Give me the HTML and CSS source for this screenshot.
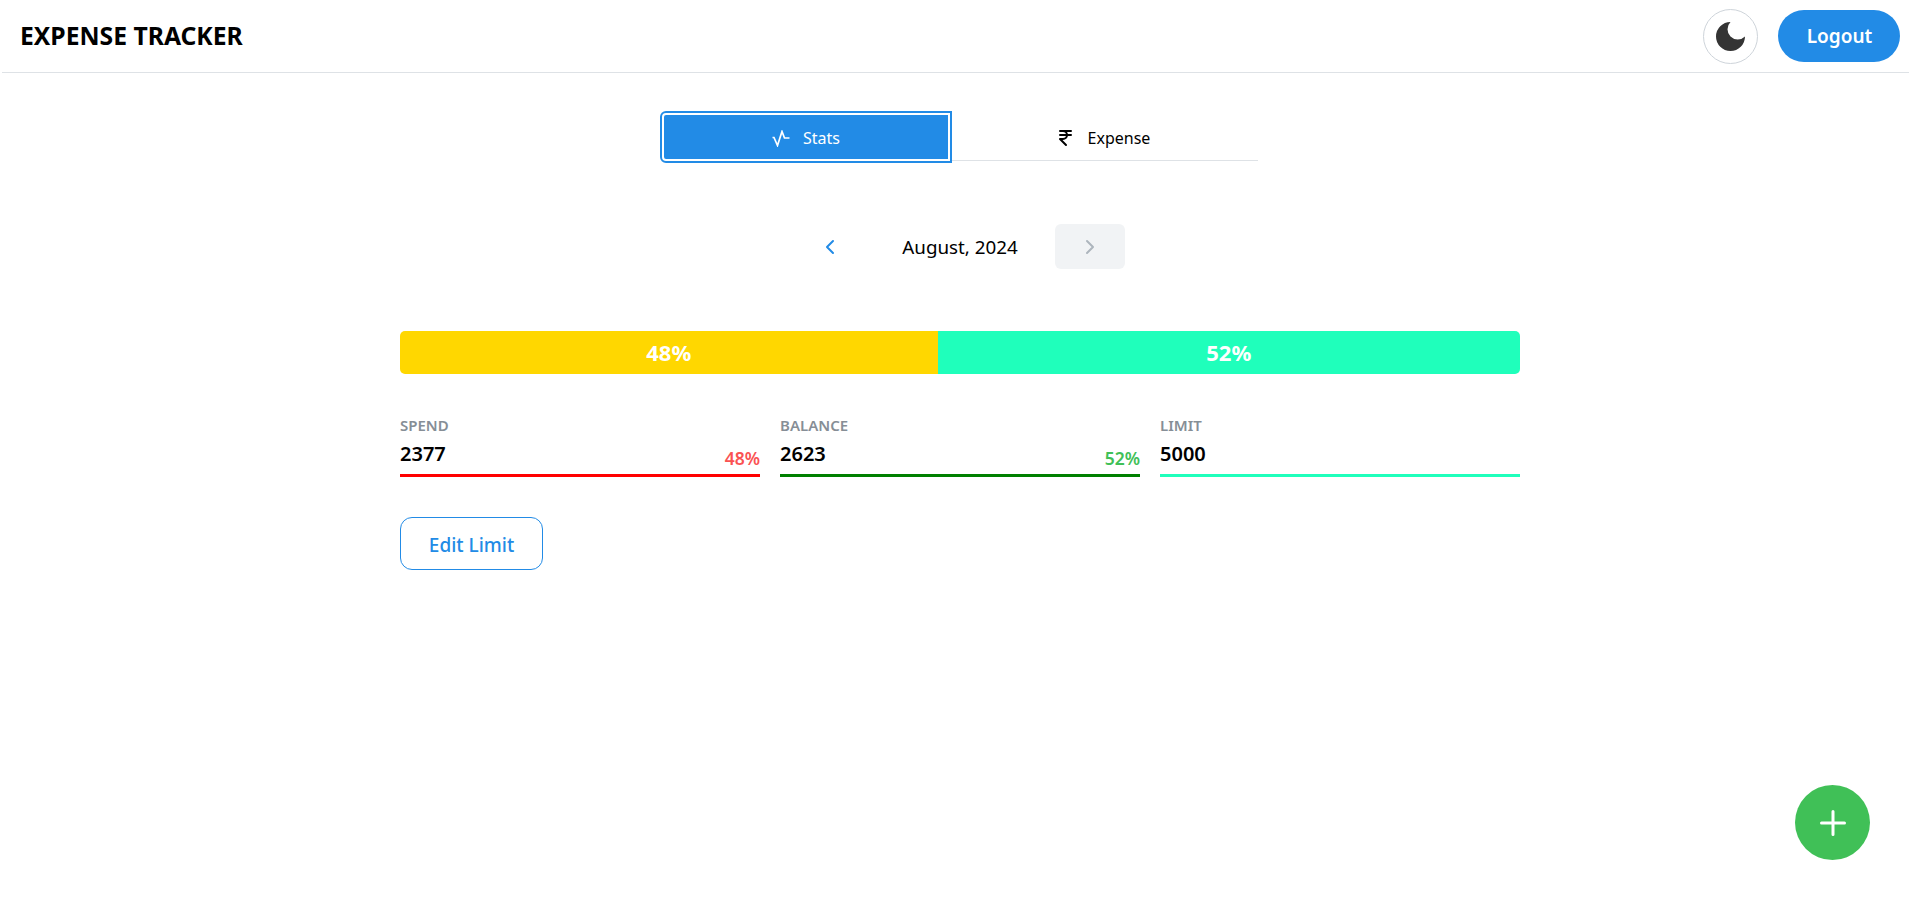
FILE: index.html
```html
<!DOCTYPE html>
<html lang="en">
<head>
<meta charset="utf-8">
<title>Expense Tracker</title>
<link rel="stylesheet" href="styles.css">
</head>
<body>
<header class="topbar">
  <h1 class="brand">EXPENSE TRACKER</h1>
  <div class="actions">
    <button class="theme-btn" aria-label="Toggle theme">
      <svg class="moon" viewBox="3 3 18 18"><path d="M12 3a6 6 0 0 0 9 9 9 9 0 1 1-9-9Z"/></svg>
    </button>
    <button class="logout">Logout</button>
  </div>
</header>
<main class="content">
  <nav class="tabs">
    <button class="tab active">
      <svg class="tab-icon" viewBox="0 0 18 17"><path d="M.5 7.5H2L5.5 15.5 10 1.5 12.5 8H17.5"/></svg>
      <span>Stats</span>
    </button>
    <button class="tab">
      <svg class="rupee" viewBox="0 0 24 24"><path d="M18 5H7h3a4 4 0 0 1 0 8H7l6 6M7 9h11"/></svg>
      <span>Expense</span>
    </button>
  </nav>
  <div class="month-row">
    <button class="nav-btn"><svg class="chev" viewBox="0 0 24 24"><path d="M15 6l-6 6 6 6"/></svg></button>
    <span class="month">August, 2024</span>
    <button class="nav-btn disabled"><svg class="chev" viewBox="0 0 24 24"><path d="M9 6l6 6-6 6"/></svg></button>
  </div>
  <div class="progress">
    <div class="seg seg-spend" style="width:48%">48%</div>
    <div class="seg seg-balance" style="width:52%">52%</div>
  </div>
  <section class="stats">
    <div class="stat stat-spend">
      <div class="stat-label">SPEND</div>
      <div class="stat-row"><span class="stat-value">2377</span><span class="stat-pct pct-red">48%</span></div>
    </div>
    <div class="stat stat-balance">
      <div class="stat-label">BALANCE</div>
      <div class="stat-row"><span class="stat-value">2623</span><span class="stat-pct pct-green">52%</span></div>
    </div>
    <div class="stat stat-limit">
      <div class="stat-label">LIMIT</div>
      <div class="stat-row"><span class="stat-value">5000</span></div>
    </div>
  </section>
  <button class="edit-limit">Edit Limit</button>
</main>
<button class="fab" aria-label="Add expense">
  <svg class="plus" viewBox="0 0 26 26"><path d="M13 1.5v23M1.5 13h23"/></svg>
</button>
</body>
</html>
```
FILE: styles.css
```css
* { box-sizing: border-box; }
html, body { margin: 0; padding: 0; background: #fff; }
body { font-family: "Noto Sans", "Open Sans", sans-serif; color: #000; height: 900px; overflow: hidden; }
button { font-family: inherit; cursor: pointer; }

.topbar {
  height: 73px;
  margin-left: 2px;
  padding: 0 9px 0 18px;
  display: flex;
  align-items: center;
  justify-content: space-between;
  border-bottom: 1px solid #dee2e6;
}
.brand { margin: 0; font-size: 24.7px; font-weight: 700; line-height: 1; color: #000; }
.actions { display: flex; align-items: center; gap: 20px; }
.theme-btn {
  width: 55px; height: 55px; padding: 0;
  border: 1px solid #ced4da; border-radius: 50%; background: #fff;
  display: flex; align-items: center; justify-content: center;
}
.moon { width: 29px; height: 29px; fill: #343434; }
.logout {
  width: 122px; height: 52px; padding: 0 0 0 1px;
  border: 0; border-radius: 26px; background: #228be6; color: #fff;
  font-size: 19px; font-weight: 600;
}

.content { width: 1120px; margin-left: 400px; padding-top: 40px; }
.tabs {
  width: 596px; margin: 0 auto;
  display: flex;
  align-items: flex-start;
  border-bottom: 1px solid #dee2e6;
  height: 48px;
}
.tab {
  flex: 1; height: 47px; padding: 2px 5px 0 0;
  border: 0; background: transparent; color: #000;
  display: flex; align-items: center; justify-content: center; gap: 11px;
  font-size: 16px;
}
.tab.active {
  flex: 0 0 288px; height: 48px; padding: 2px 0 0;
  background: #228be6; color: #fff;
  border-radius: 4px 0 0 4px;
  border: 2px solid #fff;
  outline: 2px solid #228be6;
  gap: 13px;
}
.tab-icon { width: 18px; height: 17px; fill: none; stroke: #fff; stroke-width: 1.7; }
.rupee { width: 24px; height: 24px; fill: none; stroke: #000; stroke-width: 2; stroke-linecap: round; stroke-linejoin: round; }

.month-row {
  margin-top: 63px;
  display: flex; align-items: center; justify-content: center; gap: 37.5px;
}
.month { font-size: 18.8px; }
.nav-btn {
  width: 70px; height: 45px; padding: 0;
  border: 0; border-radius: 6px; background: transparent;
  display: flex; align-items: center; justify-content: center;
}
.nav-btn.disabled { background: #f1f3f5; }
.chev { width: 24px; height: 24px; fill: none; stroke: #228be6; stroke-width: 2; stroke-linecap: round; stroke-linejoin: round; }
.disabled .chev { stroke: #adb5bd; }

.progress {
  margin-top: 62px;
  height: 43px;
  display: flex;
  border-radius: 5px;
  overflow: hidden;
}
.seg { display: flex; align-items: center; justify-content: center; padding-bottom: 2px; color: #fff; font-size: 22px; font-weight: 700; }
.seg-spend { background: #ffd700; }
.seg-balance { background: #1fffbb; }

.stats { margin-top: 41px; display: grid; grid-template-columns: repeat(3, 1fr); gap: 20px; }
.stat { border-bottom: 3px solid; padding-bottom: 6px; }
.stat-spend { border-color: #f00; }
.stat-balance { border-color: #008000; }
.stat-limit { border-color: #1fffbb; }
.stat-label { font-size: 15px; font-weight: 600; color: #868e96; line-height: 20px; }
.stat-row { display: flex; justify-content: space-between; align-items: flex-end; margin-top: 4px; height: 29px; }
.stat-value { font-size: 20px; font-weight: 600; line-height: 29px; }
.stat-pct { font-size: 17.5px; font-weight: 600; line-height: 24px; margin-bottom: -2px; }
.pct-red { color: #fa5252; }
.pct-green { color: #40c057; }

.edit-limit {
  margin-top: 40px;
  width: 143px; height: 53px; padding: 2px 0 0;
  border: 1px solid #228be6; border-radius: 12px; background: #fff; color: #228be6;
  font-size: 19px; font-weight: 500;
}

.fab {
  position: fixed; left: 1795px; top: 785px;
  width: 75px; height: 75px; padding: 0;
  border: 0; border-radius: 50%; background: #40c057;
  display: flex; align-items: center; justify-content: center;
}
.plus { width: 26px; height: 26px; fill: none; stroke: #fff; stroke-width: 3; stroke-linecap: round; }
```
